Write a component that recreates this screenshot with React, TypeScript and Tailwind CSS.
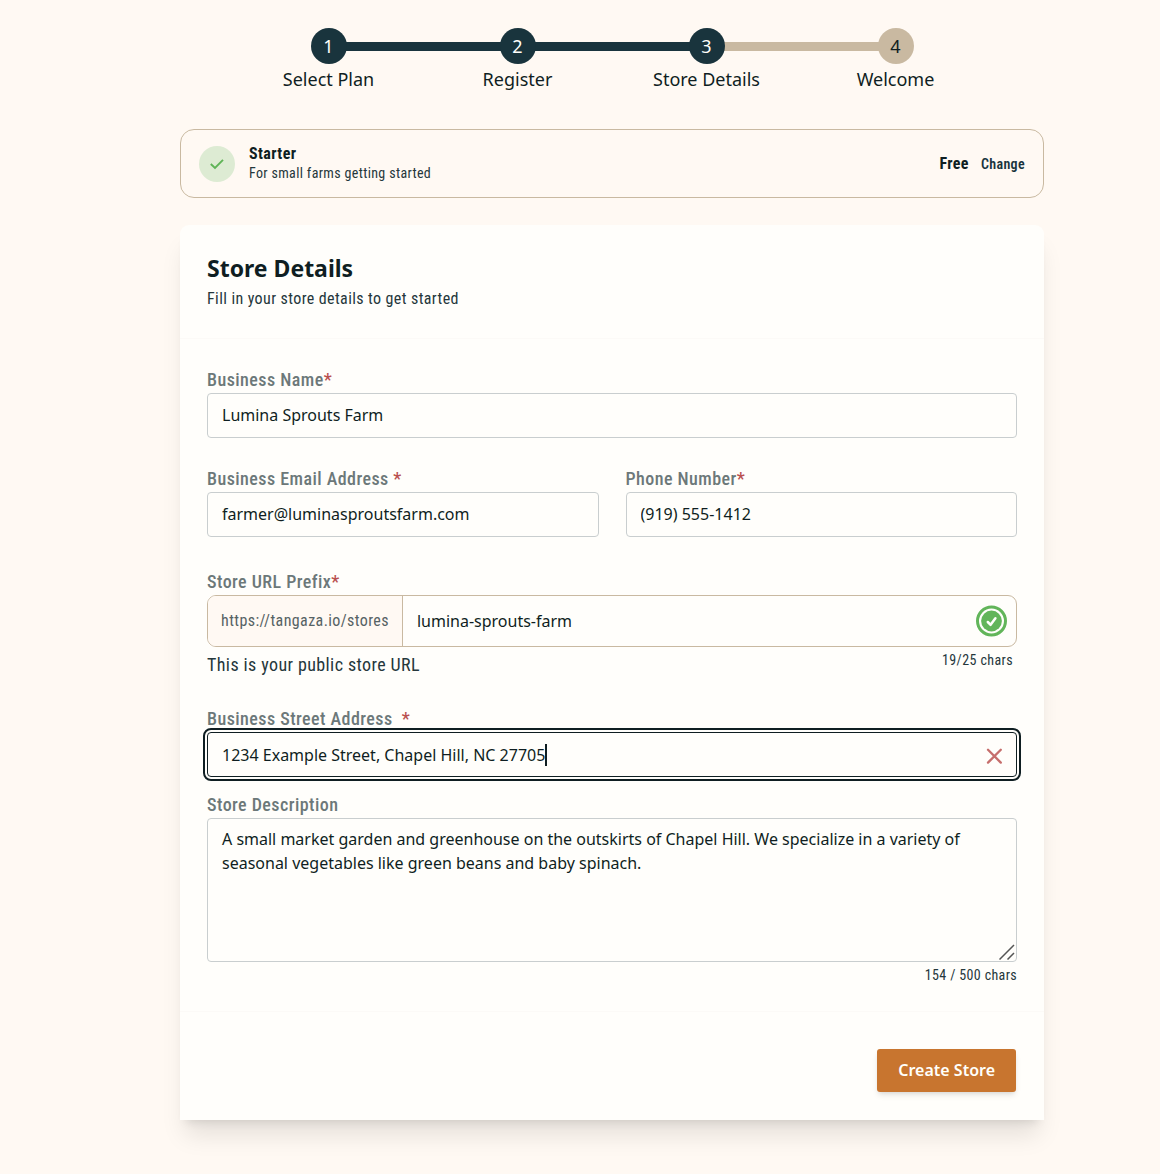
import { useState, type ReactNode } from "react";

const STEPS = ["Select Plan", "Register", "Store Details", "Welcome"];
const CURRENT_STEP = 3;

const condensed = "font-['Roboto_Condensed',Roboto,sans-serif]";
const fieldClass =
  "block h-[45px] w-full rounded-[4px] border border-[#c9cecf] bg-transparent px-[14px] pb-[2px] text-base text-[#0f1e22] outline-none";

function Label({ htmlFor, required, children }: { htmlFor: string; required?: boolean; children: ReactNode }) {
  return (
    <label htmlFor={htmlFor} className={`block text-lg leading-[27px] font-medium tracking-wide text-[#6c7879] ${condensed}`}>
      {children}
      {required && <span className="text-[#b9504f]">*</span>}
    </label>
  );
}

function Stepper() {
  return (
    <ol className="mx-[54px] grid grid-cols-4">
      {STEPS.map((name, index) => {
        const step = index + 1;
        const done = step <= CURRENT_STEP;
        return (
          <li key={name} className="relative flex flex-col items-center">
            {index > 0 && (
              <span className={`absolute top-[14px] right-1/2 h-[9px] w-full ${done ? "bg-[#19343d]" : "bg-[#c9b9a1]"}`} />
            )}
            <span
              className={`relative z-10 flex size-9 items-center justify-center rounded-full text-lg ${
                done ? "bg-[#19343d] text-[#fffffb]" : "bg-[#c9b9a1] text-[#0f1e22]"
              }`}
            >
              {step}
            </span>
            <span className="mt-[2px] text-lg leading-[27px]">{name}</span>
          </li>
        );
      })}
    </ol>
  );
}

function PlanCard() {
  return (
    <section className="mt-9 flex items-center justify-between rounded-[14px] border border-[#c9b9a1] px-[18px] py-[14px]">
      <div className="flex items-center gap-[14px]">
        <span className="flex size-9 items-center justify-center rounded-full bg-[#ddebd3]">
          <svg viewBox="0 0 18 18" className="size-[18px]" fill="none" stroke="#5fb457" strokeWidth="1.9">
            <path d="M2.8 9l4.2 4 8-8.2" />
          </svg>
        </span>
        <div className={condensed}>
          <p className="text-base leading-5 font-bold tracking-wide">Starter</p>
          <p className="text-sm leading-[19px] tracking-wide text-[#25373b]">For small farms getting started</p>
        </div>
      </div>
      <div className={`flex items-center gap-3 ${condensed}`}>
        <span className="text-base font-bold tracking-wide">Free</span>
        <button type="button" className="text-sm font-semibold tracking-wide text-[#19343d]">
          Change
        </button>
      </div>
    </section>
  );
}

export default function App() {
  const [name, setName] = useState("Lumina Sprouts Farm");
  const [email, setEmail] = useState("farmer@luminasproutsfarm.com");
  const [phone, setPhone] = useState("(919) 555-1412");
  const [prefix, setPrefix] = useState("lumina-sprouts-farm");
  const [address, setAddress] = useState("1234 Example Street, Chapel Hill, NC 27705");
  const [description, setDescription] = useState(
    "A small market garden and greenhouse on the outskirts of Chapel Hill. We specialize in a variety of seasonal vegetables like green beans and baby spinach.",
  );

  return (
    <main className="min-h-screen bg-[#fff9f3] pt-7 pb-[54px] pl-16 font-['Noto_Sans',sans-serif] text-[#0f1e22]">
      <div className="mx-auto max-w-[864px]">
        <Stepper />
        <PlanCard />

        <form
          onSubmit={(event) => event.preventDefault()}
          className="mt-[27px] rounded-t-[9px] bg-[#fffefb] shadow-xl"
        >
          <header className="border-b border-[#fcfaf7] p-[27px]">
            <h1 className="text-[23px] leading-8 font-bold">Store Details</h1>
            <p className={`mt-[3px] text-base leading-6 tracking-wide text-[#25373b] ${condensed}`}>
              Fill in your store details to get started
            </p>
          </header>

          <div className="p-[27px] pb-[26px]">
            <Label htmlFor="name" required>Business Name</Label>
            <input id="name" value={name} onChange={(e) => setName(e.target.value)} className={fieldClass} />

            <div className="mt-[27px] grid grid-cols-2 gap-[27px]">
              <div>
                <Label htmlFor="email" required>Business Email Address </Label>
                <input id="email" type="email" value={email} onChange={(e) => setEmail(e.target.value)} className={fieldClass} />
              </div>
              <div>
                <Label htmlFor="phone" required>Phone Number</Label>
                <input id="phone" type="tel" value={phone} onChange={(e) => setPhone(e.target.value)} className={fieldClass} />
              </div>
            </div>

            <div className="mt-[31px]">
              <Label htmlFor="prefix" required>Store URL Prefix</Label>
              <div className="flex h-[52px] items-stretch overflow-hidden rounded-[9px] border border-[#c9b9a1]">
                <span className={`flex items-center border-r border-[#c9b9a1] bg-[#fff9f3] px-[13px] text-base tracking-wide text-[#566264] ${condensed}`}>
                  https://tangaza.io/stores
                </span>
                <input
                  id="prefix"
                  value={prefix}
                  onChange={(e) => setPrefix(e.target.value)}
                  className="min-w-0 flex-1 bg-transparent px-[14px] text-base outline-none"
                />
                <svg viewBox="0 0 32 32" className="mr-2 size-8 self-center" fill="none">
                  <circle cx="15.5" cy="16" r="14" stroke="#62b55a" strokeWidth="3" />
                  <circle cx="15.5" cy="16" r="10.4" fill="#62b55a" />
                  <path d="M11.8 17l2.8 2.8 4.8-6.6" stroke="#fffffb" strokeWidth="2.5" strokeLinecap="round" strokeLinejoin="round" />
                </svg>
              </div>
              <div className={`flex items-start justify-between tracking-wide text-[#25373b] ${condensed}`}>
                <p className="mt-[4px] text-lg leading-[27px]">This is your public store URL</p>
                <p className="mt-[3px] mr-[4px] text-sm leading-5">{prefix.length}/25 chars</p>
              </div>
            </div>

            <div className="mt-[27px]">
              <Label htmlFor="address" required>Business Street Address&nbsp; </Label>
              <div className="relative">
                <input
                  id="address"
                  value={address}
                  onChange={(e) => setAddress(e.target.value)}
                  className="block h-[45px] w-full rounded-[4px] border border-[#0f1e22] bg-transparent px-[14px] text-base outline-2 outline-offset-2 outline-[#0f1e22]"
                />
                <span className="absolute top-[12px] left-[338px] h-[22px] w-[2px] bg-[#0f1e22]" />
                <button type="button" aria-label="Clear address" onClick={() => setAddress("")} className="absolute top-[15px] right-[14px]">
                  <svg viewBox="0 0 18 18" className="size-[18px]" fill="none" stroke="#c66e6c" strokeWidth="2.3" strokeLinecap="round">
                    <path d="M3 2.8l12.8 12.8M15.8 2.8L3 15.6" />
                  </svg>
                </button>
              </div>
            </div>

            <div className="mt-[14px]">
              <Label htmlFor="description">Store Description</Label>
              <div className="relative">
                <textarea
                  id="description"
                  value={description}
                  onChange={(e) => setDescription(e.target.value)}
                  className="block h-36 w-full resize-none rounded-[4px] border border-[#c9cecf] bg-transparent px-[14px] py-2 text-base leading-6 outline-none"
                />
                <svg viewBox="0 0 16 16" className="pointer-events-none absolute right-[2px] bottom-[2px] size-4" fill="none" stroke="#555" strokeWidth="1.5">
                  <path d="M0.5 15.5l14.5-14.5M8.5 15.5l6.5-6.5" />
                </svg>
              </div>
              <p className={`mt-[3px] text-right text-sm leading-5 tracking-wide text-[#25373b] ${condensed}`}>
                {description.length} / 500 chars
              </p>
            </div>
          </div>

          <footer className="flex justify-end border-t border-[#fcfaf7] px-7 pt-[37px] pb-7">
            <button
              type="submit"
              className="h-[43px] rounded-[3px] bg-[#c8752f] px-[21px] pb-[2px] text-base font-semibold text-[#fffffb] shadow-md"
            >
              Create Store
            </button>
          </footer>
        </form>
      </div>
    </main>
  );
}
